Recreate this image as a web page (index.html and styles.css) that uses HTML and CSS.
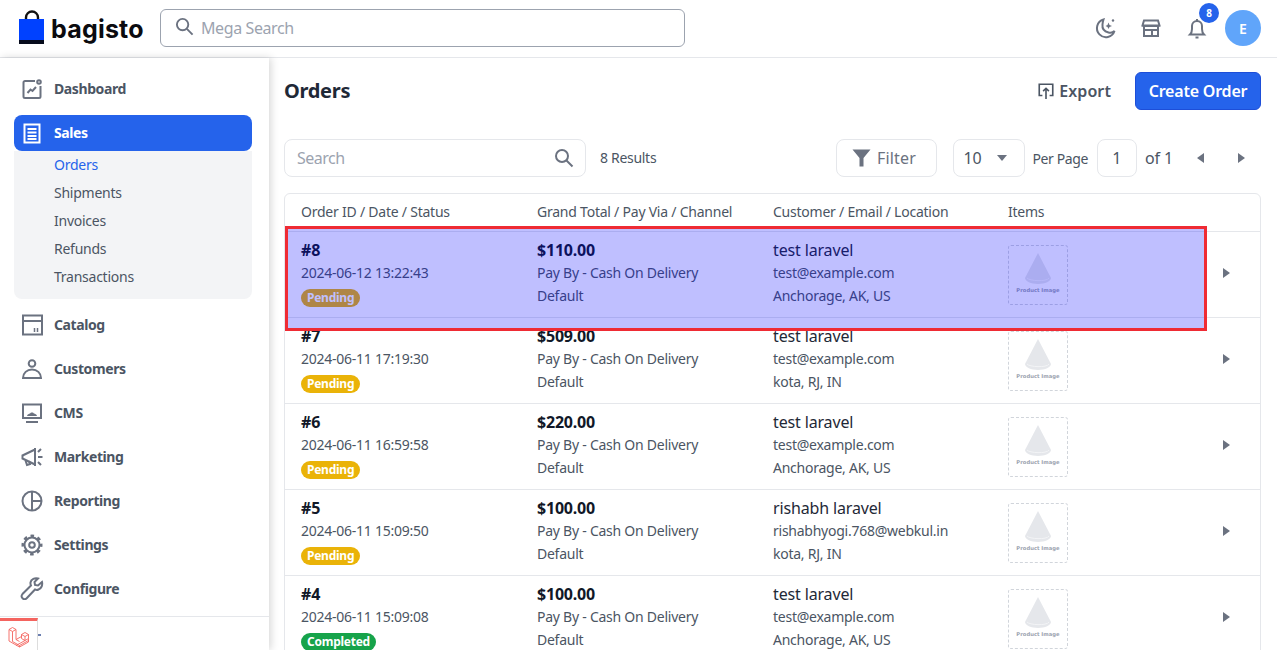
FILE: index.html
```html
<!DOCTYPE html>
<html lang="en">
<head>
<meta charset="utf-8">
<title>Orders</title>
<link rel="stylesheet" href="styles.css">
</head>
<body>
<header class="topbar">
  <div class="brand">
    <svg class="bag" width="26" height="36" viewBox="0 0 26 36"><path d="M7 14V7.500a6 6 0 0 1 12 0V14" fill="none" stroke="#111" stroke-width="2.400"/><rect x="0" y="9" width="25" height="25" fill="#0041ff"/><rect x="0" y="30" width="25" height="4" fill="#060b1c"/></svg>
    <span class="brand-name">bagisto</span>
  </div>
  <div class="mega">
    <svg width="19" height="19" viewBox="0 0 20 20" fill="none" stroke="#6b7280" stroke-width="2"><circle cx="8" cy="8" r="6"/><path d="M12.500 12.500 18.500 18.500"/></svg>
    <span>Mega Search</span>
  </div>
  <div class="top-actions">
    <svg class="ti" width="24" height="24" viewBox="0 0 24 24" fill="none" stroke="#6b7280" stroke-width="2"><path d="M10.500 3.500a9 9 0 1 0 11 11.500c-1.500 1.500-4 2-6 1.500-4-1-6.500-4-6-8 .2-2 .5-3.500 1-5Z"/><path d="M15.500 6.500l1 2.500 2.500 1-2.500 1-1 2-1-2-2-1 2-1Z" fill="#6b7280" stroke="none"/><circle cx="20" cy="4.500" r="1.200" fill="#6b7280" stroke="none"/></svg>
    <svg class="ti" width="24" height="24" viewBox="0 0 24 24" fill="none" stroke="#6b7280" stroke-width="2"><path d="M5 4.500h14l1.500 5H3.500ZM3.500 10h17M5 10v10h14V10M5 14h14M13 14v6"/></svg>
    <div class="bell">
      <svg class="ti" width="24" height="24" viewBox="0 0 24 24" fill="none" stroke="#6b7280" stroke-width="2"><path d="M5 18.500c1.500-1.500 2-3 2-5.500V10a5 5 0 0 1 10 0v3c0 2.500.5 4 2 5.500Z"/><path d="M12 3v2M10.500 21.500h3"/></svg>
      <span class="badge">8</span>
    </div>
    <span class="avatar">E</span>
  </div>
</header>

<div class="shell">
  <aside class="sidebar">
    <nav class="nav">
      <a class="nav-item"><svg class="ni" viewBox="0 0 24 24"><path d="M15 4H5a1.500 1.500 0 0 0-1.500 1.500v14A1.500 1.500 0 0 0 5 21h14a1.500 1.500 0 0 0 1.500-1.500V9"/><circle cx="19" cy="5" r="1.800"/><path d="M7.500 16l3-3.500 2 1.500 3.500-4"/></svg>Dashboard</a>
      <div class="group">
        <a class="nav-item active"><svg class="ni" viewBox="0 0 24 24"><rect x="4.500" y="3.500" width="15" height="18"/><path d="M7.500 8h9M7.500 11.500h9M7.500 15h9M7.500 18h9"/></svg>Sales</a>
        <div class="sub">
          <a class="sub-item current">Orders</a>
          <a class="sub-item">Shipments</a>
          <a class="sub-item">Invoices</a>
          <a class="sub-item">Refunds</a>
          <a class="sub-item">Transactions</a>
        </div>
      </div>
      <a class="nav-item"><svg class="ni" viewBox="0 0 24 24"><rect x="3" y="2.500" width="19" height="19"/><path d="M3 8h19"/><path d="M14.500 19v-4M17.500 19v-4" stroke-width="1.500"/></svg>Catalog</a>
      <a class="nav-item"><svg class="ni" viewBox="0 0 24 24"><circle cx="12" cy="6.500" r="3.300"/><path d="M3 21c0-5 4-8.500 9-8.500s9 3.500 9 8.500ZM3 21h18"/></svg>Customers</a>
      <a class="nav-item"><svg class="ni" viewBox="0 0 24 24"><rect x="3" y="3.500" width="18" height="13.500"/><path d="M6 21h12"/><path d="M7 15c.5-2 2-2 3-2.500.5-1.500 3.500-1.500 4 0 1 .5 2.500.5 3 2.500Z" fill="#6b7280" stroke="none"/></svg>CMS</a>
      <a class="nav-item"><svg class="ni" viewBox="0 0 24 24"><path d="M15 3v18M15 4.500 2.500 10.500v3L15 19.500"/><path d="M5.500 15.500l1.500 4.500 3-1-1-3"/><path d="M18 7l3-3M18 12h4.500M18 17l3 3"/></svg>Marketing</a>
      <a class="nav-item"><svg class="ni" viewBox="0 0 24 24"><circle cx="12" cy="12" r="9.500"/><path d="M12 2.500v19M12 12h9.500"/></svg>Reporting</a>
      <a class="nav-item"><svg class="ni" viewBox="0 0 24 24"><circle cx="12" cy="12" r="7.500"/><circle cx="12" cy="12" r="2.800"/><circle class="gear-teeth" cx="12" cy="12" r="9"/></svg>Settings</a>
      <a class="nav-item"><svg class="ni" viewBox="0 0 24 24"><path d="M22 5l-4 3.500-3-.5-.5-3L18 1.500c-3-.8-7 .5-7.500 4-.1 1 0 2 .5 3L2.500 17c-1.200 1.500-1.200 3 0 4.200 1.200 1.200 3 1.200 4.200 0L15 12.500c1 .4 2.500.5 3.500 0 3-1 4.200-4.500 3.500-7.500Z"/></svg>Configure</a>
    </nav>
    <div class="side-foot"></div>
  </aside>

  <main class="content">
    <div class="title-row">
      <h1>Orders</h1>
      <div class="title-actions">
        <a class="export"><svg width="18" height="18" viewBox="0 0 20 20" fill="none" stroke="#4b5563" stroke-width="1.800"><path d="M6 15H2.500V2.500h15V15H14"/><path d="M10 19V7M6.800 10.200 10 7l3.200 3.200"/></svg>Export</a>
        <a class="primary">Create Order</a>
      </div>
    </div>

    <div class="tools">
      <div class="search"><span>Search</span><svg width="20" height="20" viewBox="0 0 20 20" fill="none" stroke="#6b7280" stroke-width="2"><circle cx="8" cy="8" r="6"/><path d="M12.500 12.500 18.500 18.500"/></svg></div>
      <span class="results">8 Results</span>
      <div class="pager">
        <a class="filter"><svg width="19" height="18" viewBox="0 0 18 18"><path d="M0 .5h18L11 9v8.500H7V9Z" fill="#6b7280"/></svg>Filter</a>
        <div class="per"><span>10</span><i class="caret-d"></i></div>
        <span class="per-label">Per Page</span>
        <div class="page-box">1</div>
        <span class="of">of 1</span>
        <div class="arrows"><i class="caret-l"></i><i class="caret-r"></i></div>
      </div>
    </div>

    <section class="table">
      <div class="row head">
        <span>Order ID / Date / Status</span>
        <span>Grand Total / Pay Via / Channel</span>
        <span>Customer / Email / Location</span>
        <span>Items</span>
      </div>

      <div class="row">
        <div class="cell"><b>#8</b><span>2024-06-12 13:22:43</span><em class="pill pending">Pending</em></div>
        <div class="cell"><b>$110.00</b><span>Pay By - Cash On Delivery</span><span>Default</span></div>
        <div class="cell"><strong>test laravel</strong><span>test@example.com</span><span>Anchorage, AK, US</span></div>
        <div class="items"><div class="thumb"><svg width="30" height="32" viewBox="0 0 30 32"><path d="M15 0 28 25c0 3-6 6-13 6S2 28 2 25Z" fill="#e5e7eb"/><path d="M4 25c2 3 20 4 22 0" fill="none" stroke="#f3f4f6"/></svg><small>Product Image</small></div><i class="caret-r row-go"></i></div>
      </div>

      <div class="row">
        <div class="cell"><b>#7</b><span>2024-06-11 17:19:30</span><em class="pill pending">Pending</em></div>
        <div class="cell"><b>$509.00</b><span>Pay By - Cash On Delivery</span><span>Default</span></div>
        <div class="cell"><strong>test laravel</strong><span>test@example.com</span><span>kota, RJ, IN</span></div>
        <div class="items"><div class="thumb"><svg width="30" height="32" viewBox="0 0 30 32"><path d="M15 0 28 25c0 3-6 6-13 6S2 28 2 25Z" fill="#e5e7eb"/><path d="M4 25c2 3 20 4 22 0" fill="none" stroke="#f3f4f6"/></svg><small>Product Image</small></div><i class="caret-r row-go"></i></div>
      </div>

      <div class="row">
        <div class="cell"><b>#6</b><span>2024-06-11 16:59:58</span><em class="pill pending">Pending</em></div>
        <div class="cell"><b>$220.00</b><span>Pay By - Cash On Delivery</span><span>Default</span></div>
        <div class="cell"><strong>test laravel</strong><span>test@example.com</span><span>Anchorage, AK, US</span></div>
        <div class="items"><div class="thumb"><svg width="30" height="32" viewBox="0 0 30 32"><path d="M15 0 28 25c0 3-6 6-13 6S2 28 2 25Z" fill="#e5e7eb"/><path d="M4 25c2 3 20 4 22 0" fill="none" stroke="#f3f4f6"/></svg><small>Product Image</small></div><i class="caret-r row-go"></i></div>
      </div>

      <div class="row">
        <div class="cell"><b>#5</b><span>2024-06-11 15:09:50</span><em class="pill pending">Pending</em></div>
        <div class="cell"><b>$100.00</b><span>Pay By - Cash On Delivery</span><span>Default</span></div>
        <div class="cell"><strong>rishabh laravel</strong><span>rishabhyogi.768@webkul.in</span><span>kota, RJ, IN</span></div>
        <div class="items"><div class="thumb"><svg width="30" height="32" viewBox="0 0 30 32"><path d="M15 0 28 25c0 3-6 6-13 6S2 28 2 25Z" fill="#e5e7eb"/><path d="M4 25c2 3 20 4 22 0" fill="none" stroke="#f3f4f6"/></svg><small>Product Image</small></div><i class="caret-r row-go"></i></div>
      </div>

      <div class="row">
        <div class="cell"><b>#4</b><span>2024-06-11 15:09:08</span><em class="pill completed">Completed</em></div>
        <div class="cell"><b>$100.00</b><span>Pay By - Cash On Delivery</span><span>Default</span></div>
        <div class="cell"><strong>test laravel</strong><span>test@example.com</span><span>Anchorage, AK, US</span></div>
        <div class="items"><div class="thumb"><svg width="30" height="32" viewBox="0 0 30 32"><path d="M15 0 28 25c0 3-6 6-13 6S2 28 2 25Z" fill="#e5e7eb"/><path d="M4 25c2 3 20 4 22 0" fill="none" stroke="#f3f4f6"/></svg><small>Product Image</small></div><i class="caret-r row-go"></i></div>
      </div>
    </section>
  </main>
</div>

<div class="highlight"></div>

<div class="debugbar">
  <svg width="22" height="22" viewBox="0 0 22 22" fill="none" stroke="#f4645f" stroke-width=".9" stroke-linejoin="round"><path d="M1 3.500 4.500 1.500 8 3.500 4.500 5.500ZM1 3.500V15l10.500 6 9-5v-3.500M8 3.500v10l3.500 2M4.500 5.500v10l7 4V21M11.500 19.500l9-5"/><path d="M13.500 8.500 17 6.500l3.500 2L17 10.500ZM13.500 8.500v4l3.500 2 3.500-2v-4M17 10.500v4M8 13.500l5.500-3M17 14.500l-9 5"/></svg>
</div>
<i class="debug-tab"></i>
</body>
</html>
```

FILE: styles.css
```css
* { box-sizing: border-box; }
html, body { margin: 0; height: 100%; overflow: hidden; }
body {
  font-family: "Noto Sans", "Open Sans", sans-serif;
  font-size: 14px;
  color: #4b5563;
  background: #fff;
  position: relative;
}
a { display: block; }
h1 { margin: 0; }

/* top bar */
.topbar {
  height: 58px;
  display: flex;
  align-items: center;
  padding: 0 16px 1px 19px;
  border-bottom: 1px solid #e5e7eb;
  background: #fff;
}
.brand { width: 141px; display: flex; align-items: center; gap: 6px; }
.bag { flex: none; }
.brand-name {
  font-family: "Inter", sans-serif;
  font-weight: 700;
  font-size: 25px;
  letter-spacing: .2px;
  color: #0b0b0f;
  line-height: 30px;
  margin-top: 2px;
}
.mega {
  width: 525px;
  height: 38px;
  display: flex;
  align-items: center;
  gap: 7px;
  padding-left: 14px;
  border: 1px solid #9ca3af;
  border-radius: 6px;
  color: #9ca3af;
  font-size: 16px;
  letter-spacing: -.4px;
}
.mega svg { margin-top: -4px; }
.top-actions { margin-left: auto; display: flex; align-items: center; }
.ti { display: block; }
.top-actions > .ti { margin-right: 22px; }
.bell { position: relative; margin-right: 16px; }
.badge {
  position: absolute;
  top: -13px;
  left: 14px;
  width: 20px;
  height: 20px;
  border-radius: 50%;
  background: #2563eb;
  color: #fff;
  font-size: 10px;
  font-weight: 700;
  display: flex;
  align-items: center;
  justify-content: center;
}
.avatar {
  width: 36px;
  height: 36px;
  border-radius: 50%;
  background: #60a5fa;
  color: #fff;
  font-size: 14px;
  font-weight: 600;
  display: flex;
  align-items: center;
  justify-content: center;
}

/* shell */
.shell { display: flex; height: calc(100% - 58px); }
.sidebar {
  width: 269px;
  flex: none;
  display: flex;
  flex-direction: column;
  background: #fff;
  box-shadow: 2px 0 8px rgba(0, 0, 0, .16);
  position: relative;
}
.nav {
  flex: 1;
  padding: 13px 17px 0 14px;
  display: flex;
  flex-direction: column;
  gap: 8px;
}
.nav-item {
  height: 36px;
  display: flex;
  align-items: center;
  gap: 10px;
  padding: 0 0 2px 6px;
  font-size: 14px;
  font-weight: 700;
  letter-spacing: -.4px;
  color: #4b5563;
  border-radius: 8px;
}
.ni {
  width: 24px;
  height: 24px;
  flex: none;
  margin-top: 2px;
  fill: none;
  stroke: #6b7280;
  stroke-width: 2;
}
.gear-teeth { stroke-width: 3; stroke-dasharray: 3.500 3.570; stroke-dashoffset: 1.750; }
.nav-item.active { background: #2563eb; color: #fff; }
.active .ni { stroke: #fff; }
.sub {
  background: #f3f4f6;
  border-radius: 0 0 8px 8px;
  height: 148px;
}
.sub-item {
  height: 28px;
  line-height: 28px;
  padding-left: 40px;
  font-size: 14px;
  letter-spacing: -.25px;
  color: #4b5563;
}
.sub-item.current { color: #2563eb; }
.side-foot { height: 34px; flex: none; border-top: 1px solid #e5e7eb; }

/* content */
.content { flex: 1; min-width: 0; padding: 14px 16px 0 15px; overflow: hidden; }
.title-row { display: flex; justify-content: space-between; align-items: center; height: 38px; }
h1 { font-size: 20px; font-weight: 700; color: #1f2937; letter-spacing: -.3px; padding-bottom: 2px; }
.title-actions { display: flex; align-items: center; gap: 24px; }
.export {
  display: flex;
  align-items: center;
  gap: 4px;
  font-size: 16px;
  font-weight: 600;
  color: #4b5563;
  letter-spacing: .1px;
}
.primary {
  width: 126px;
  height: 38px;
  line-height: 36px;
  text-align: center;
  border: 1px solid #1d4ed8;
  border-radius: 6px;
  background: #2563eb;
  color: #fff;
  font-size: 16px;
  font-weight: 600;
  letter-spacing: -.2px;
}
.tools { display: flex; align-items: center; margin-top: 29px; height: 38px; }
.search {
  width: 302px;
  height: 38px;
  display: flex;
  justify-content: space-between;
  align-items: center;
  padding: 0 11px 0 12px;
  border: 1px solid #e5e7eb;
  border-radius: 8px;
  color: #9ca3af;
  font-size: 16px;
  letter-spacing: -.5px;
}
.results { margin-left: 14px; letter-spacing: -.3px; padding-bottom: 2px; }
.pager { margin-left: auto; display: flex; align-items: center; }
.filter {
  width: 101px;
  height: 38px;
  display: flex;
  align-items: center;
  justify-content: center;
  gap: 6px;
  padding-right: 6px;
  border: 1px solid #e5e7eb;
  border-radius: 8px;
  font-size: 16px;
  color: #6b7280;
  letter-spacing: .2px;
}
.per {
  width: 72px;
  height: 38px;
  margin-left: 16px;
  display: flex;
  align-items: center;
  gap: 15px;
  padding-left: 9px;
  border: 1px solid #e5e7eb;
  border-radius: 8px;
  font-size: 16px;
}
.per-label { margin-left: 7px; letter-spacing: -.4px; }
.page-box {
  width: 40px;
  height: 38px;
  margin-left: 9px;
  display: flex;
  align-items: center;
  justify-content: center;
  border: 1px solid #e5e7eb;
  border-radius: 8px;
  font-size: 16px;
}
.of { margin-left: 8px; font-size: 16px; letter-spacing: -.1px; }
.arrows { width: 64px; margin-left: 16px; margin-right: 8px; display: flex; justify-content: space-between; padding: 0 8px; }
.caret-d, .caret-l, .caret-r { display: block; width: 0; height: 0; border-style: solid; border-color: transparent; }
.caret-d { border-width: 6px 5px 0; border-top-color: #6b7280; }
.caret-l { border-width: 5px 7px 5px 0; border-right-color: #6b7280; }
.caret-r { border-width: 5px 0 5px 7px; border-left-color: #6b7280; }

/* table */
.table {
  margin-top: 16px;
  border: 1px solid #e5e7eb;
  border-radius: 6px 6px 0 0;
}
.row {
  display: grid;
  grid-template-columns: 236px 236px 235px 1fr;
  height: 86px;
  padding: 0 0 0 16px;
  border-top: 1px solid #e5e7eb;
  align-items: start;
}
.row.head {
  height: 37px;
  padding-bottom: 2px;
  border-top: 0;
  align-items: center;
  letter-spacing: -.23px;
}
.cell { display: flex; flex-direction: column; padding-top: 6px; align-items: flex-start; }
.cell b, .cell strong { font-size: 16px; line-height: 24px; margin-bottom: -1px; }
.cell b { font-weight: 700; letter-spacing: -.2px; color: #111827; }
.cell strong { font-weight: 400; letter-spacing: -.15px; color: #1f2937; }
.cell span { font-size: 14px; line-height: 23px; letter-spacing: -.25px; color: #4b5563; }
.pill {
  font-style: normal;
  font-size: 12px;
  font-weight: 700;
  line-height: 18px;
  height: 18px;
  padding: 0 6px;
  margin-top: 5px;
  border-radius: 9px;
  color: #fff;
  letter-spacing: -.25px;
}
.pending { background: #eab308; }
.completed { background: #16a34a; }
.items { display: flex; align-items: center; height: 85px; }
.thumb {
  width: 60px;
  height: 60px;
  border: 1px dashed #d1d5db;
  border-radius: 3px;
  display: flex;
  flex-direction: column;
  align-items: center;
  padding-top: 7px;
}
.thumb small {
  font-family: "DejaVu Sans", sans-serif;
  font-size: 5.250px;
  font-weight: 700;
  color: #9ca3af;
  line-height: 8px;
  margin-top: 1px;
  white-space: nowrap;
}
.row-go { margin: -4px 30px 0 auto; }

/* overlays */
.highlight {
  position: absolute;
  left: 285px;
  top: 226px;
  width: 922px;
  height: 105px;
  border: 3px solid #ef2b34;
  background: rgba(0, 0, 255, .25);
}
.debugbar {
  position: absolute;
  left: 0;
  top: 618px;
  width: 38px;
  height: 32px;
  background: #fff;
  border-top: 3px solid #f4645f;
  border-right: 1px solid #ddd;
  display: flex;
  align-items: center;
  justify-content: center;
}
.debugbar svg { margin-top: 2px; }
.debug-tab {
  position: absolute;
  left: 38px;
  top: 634px;
  width: 3px;
  height: 2px;
  background: #6b7fb0;
}
```
